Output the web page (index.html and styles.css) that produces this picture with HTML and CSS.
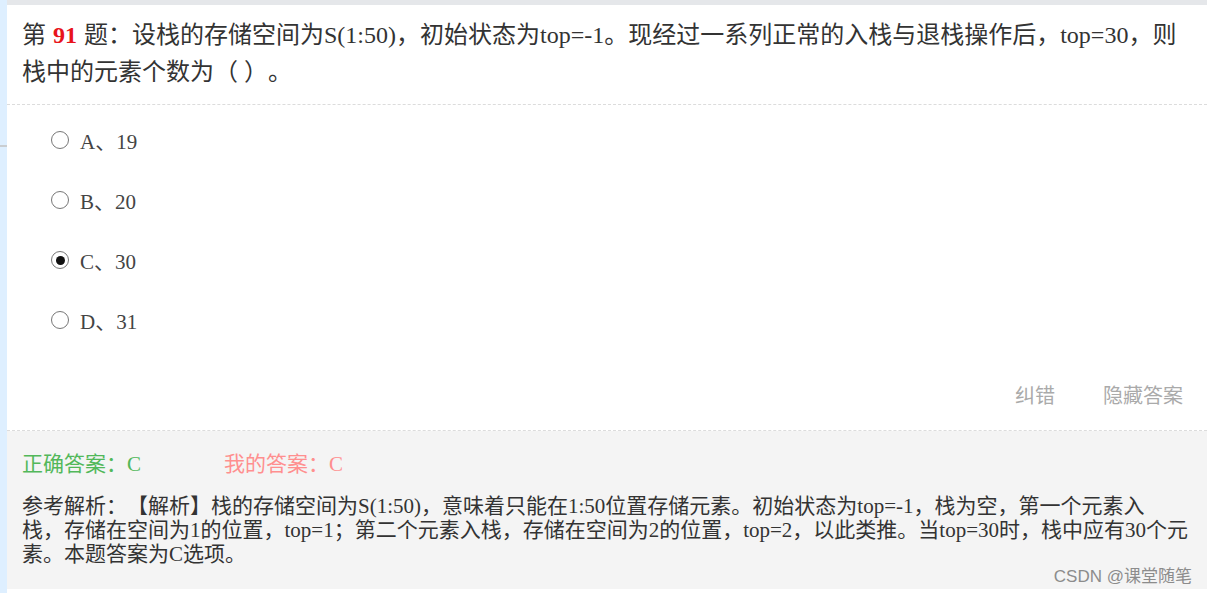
FILE: index.html
```
<!DOCTYPE html>
<html lang="zh-CN">
<head>
    <meta charset="UTF-8">
    <meta name="viewport" content="width=device-width, initial-scale=1.0">
    <title>第91题</title>
    <link rel="stylesheet" href="styles.css">
</head>
<body>
    <div class="page">
        <div class="side"><span class="side-line"></span></div>

        <div class="card">
            <div class="q-title">第<b class="q-num">91</b>题：设栈的存储空间为S(1:50)，初始状态为top=-1。现经过一系列正常的入栈与退栈操作后，top=30，则栈中的元素个数为（ ）。</div>

            <ul class="options">
                <li><span class="radio"></span>A、19</li>
                <li><span class="radio"></span>B、20</li>
                <li><span class="radio checked"></span>C、30</li>
                <li><span class="radio"></span>D、31</li>
            </ul>

            <div class="actions">
                <a href="#">纠错</a>
                <a href="#">隐藏答案</a>
            </div>

            <div class="answer-box">
                <div class="answers">
                    <span class="right">正确答案：C</span>
                    <span class="mine">我的答案：C</span>
                </div>
                <p class="analysis">参考解析：【解析】栈的存储空间为S(1:50)，意味着只能在1:50位置存储元素。初始状态为top=-1，栈为空，第一个元素入<br>栈，存储在空间为1的位置，top=1；第二个元素入栈，存储在空间为2的位置，top=2，以此类推。当top=30时，栈中应有30个元素。本题答案为C选项。</p>
            </div>
        </div>

        <div class="watermark">CSDN @课堂随笔</div>
    </div>
</body>
</html>
```

FILE: styles.css
```
/* base */
body {
    margin: 0;
    padding: 0;
    background: #fff;
    font-family: 'Liberation Serif', 'Noto Sans CJK SC', serif;
    color: #333;
    text-spacing-trim: space-all;
}

.page {
    position: relative;
    display: flex;
    height: 593px;
    overflow: hidden;
}

/* blue strip on the left */
.side {
    width: 7px;
    flex: none;
    background: #deefff;
}

.side-line {
    display: block;
    height: 2px;
    margin-top: 145px;
    background: #c9cdd1;
}

/* question card */
.card {
    flex: 1;
    border-top: 5px solid #e5e7ea;
    background: #fff;
}

.q-title {
    padding: 12px 20px 13px 15px;
    font-size: 24px;
    line-height: 37px;
    border-bottom: 1px dashed #dcdcdc;
}

.q-num {
    margin: 0 7px;
    color: #e8141b;
}

/* options */
.options {
    list-style: none;
    margin: 0;
    padding: 5px 0 0 44px;
}

.options li {
    display: flex;
    align-items: center;
    height: 60px;
    font-size: 21px;
    color: #444;
}

.radio {
    box-sizing: border-box;
    width: 18px;
    height: 18px;
    border: 1.6px solid #777;
    border-radius: 50%;
    margin-right: 11px;
    display: flex;
    align-items: center;
    justify-content: center;
}

.radio.checked::after {
    content: '';
    width: 9px;
    height: 9px;
    border-radius: 50%;
    background: #111;
}

/* actions */
.actions {
    display: flex;
    justify-content: flex-end;
    align-items: center;
    height: 40px;
    margin-top: 24px;
    padding: 0 24px 16px 0;
    border-bottom: 1px dashed #dcdcdc;
}

.actions a {
    margin-left: 48px;
    font-family: 'Noto Sans CJK SC', sans-serif;
    font-size: 20px;
    color: #aaa;
    text-decoration: none;
}

/* answer and analysis */
.answer-box {
    background: #f4f4f4;
    padding: 18px 4px 23px 15px;
}

.answers {
    display: flex;
    line-height: 30px;
    font-size: 21px;
}

.answers .right {
    width: 202px;
    color: #52b85a;
}

.answers .mine {
    color: #ff8f8f;
}

.analysis {
    margin: 15px 0 0;
    font-size: 21px;
    line-height: 24px;
    max-width: 1176px;
}

/* watermark */
.watermark {
    position: absolute;
    right: 15px;
    bottom: 6px;
    font-family: 'Liberation Sans', 'Noto Sans CJK SC', sans-serif;
    font-size: 17px;
    color: #8c8c8c;
}
```
